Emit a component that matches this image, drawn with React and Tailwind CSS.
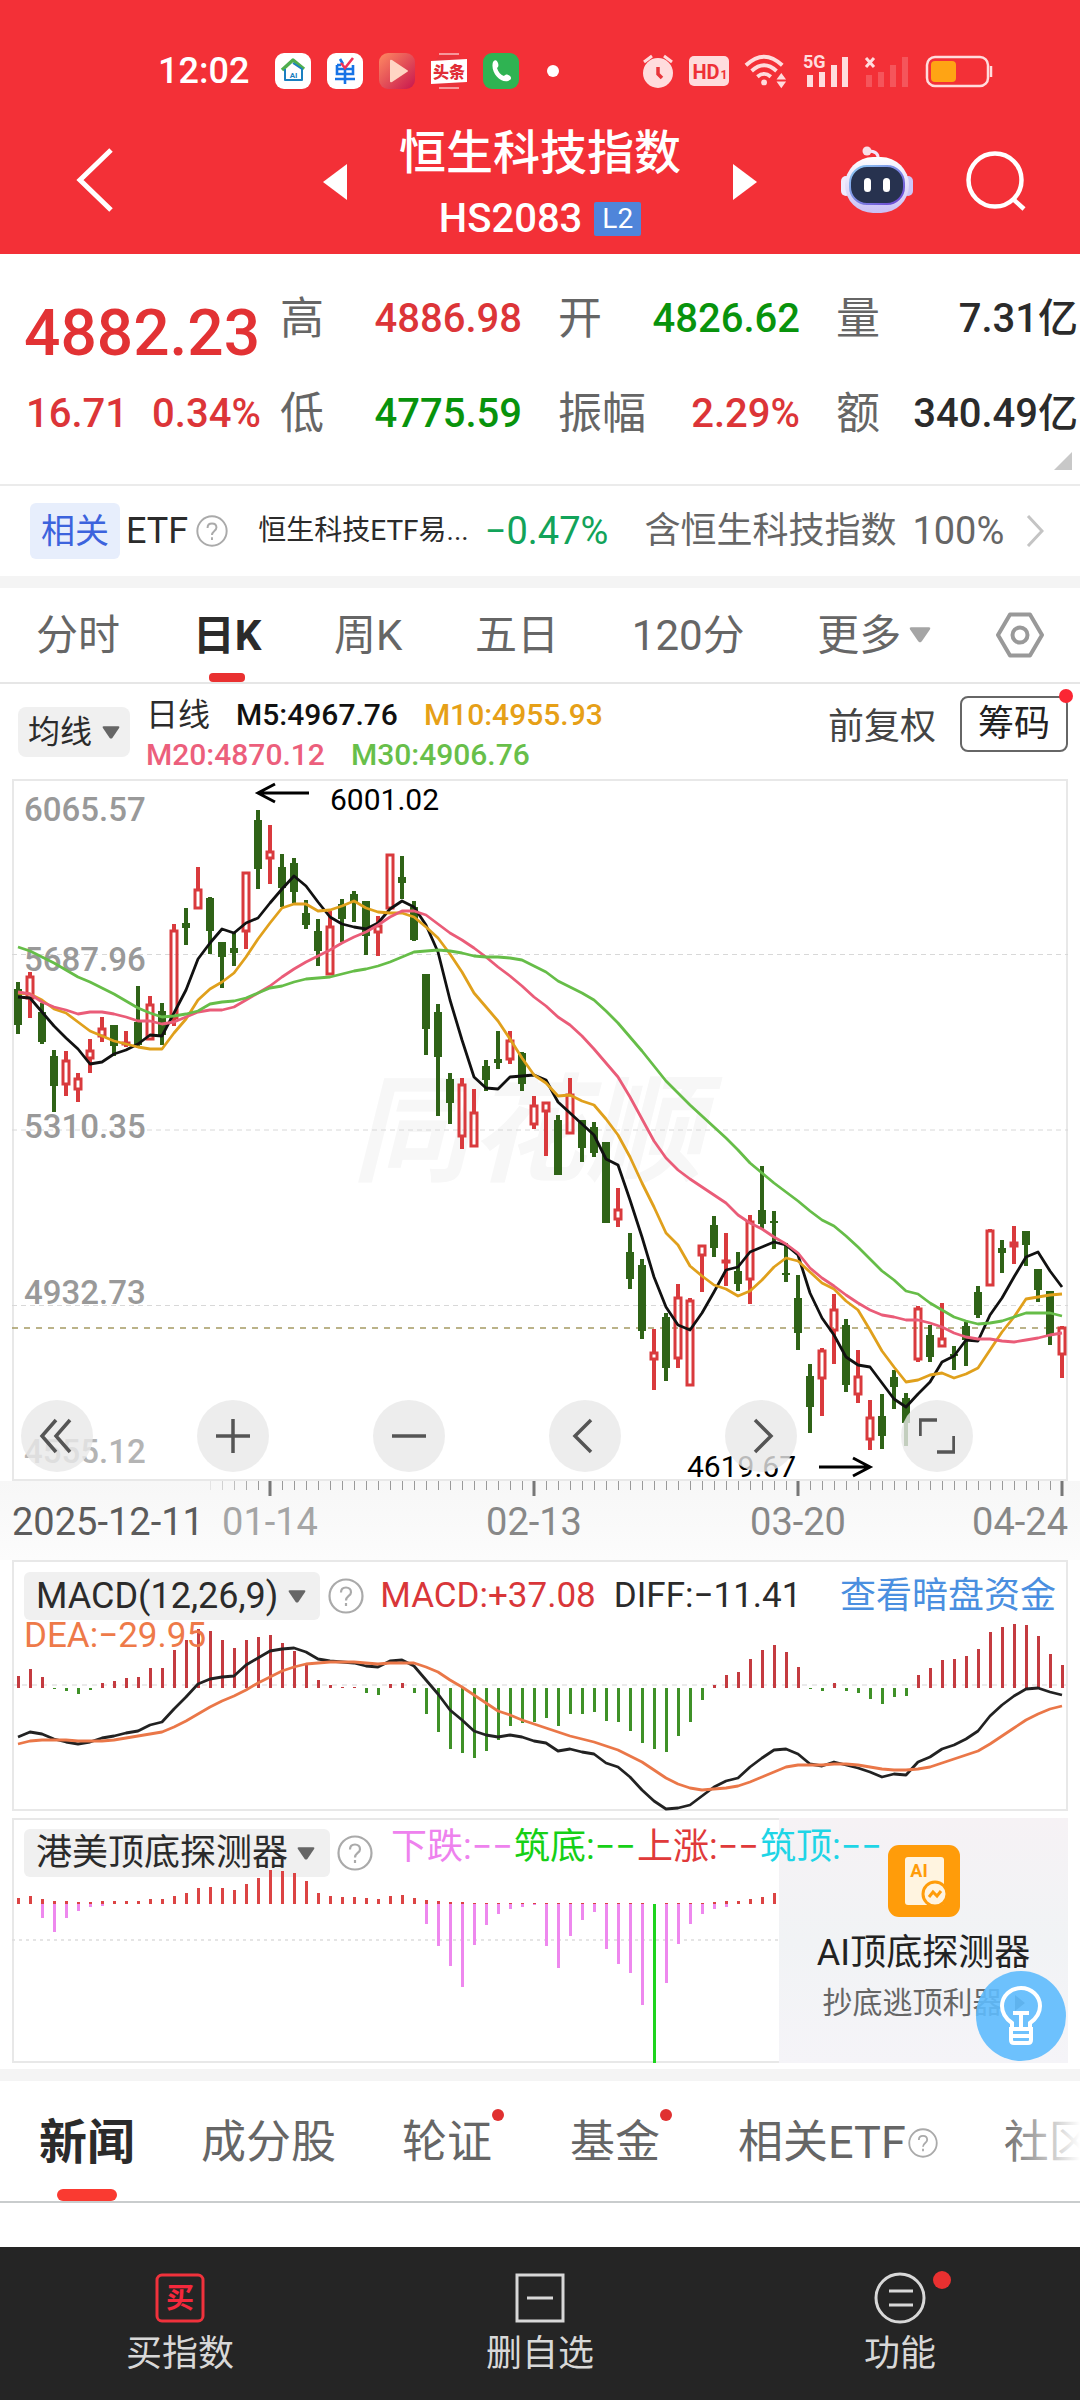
const STEP = 12;

// [up, high, body top, body bottom, low]
const candles = [
  [0, 203, 210, 246, 255], [1, 193, 197, 220, 239], [0, 224, 233, 263, 265], [0, 271, 277, 307, 333],
  [1, 272, 281, 306, 317], [1, 294, 299, 311, 323], [1, 260, 271, 280, 294], [1, 238, 249, 258, 263],
  [0, 246, 246, 267, 277], [1, 252, 263, 266, 268], [0, 207, 243, 266, 269], [1, 217, 225, 261, 261],
  [0, 224, 232, 256, 266], [1, 145, 151, 240, 247], [0, 129, 144, 149, 166], [1, 88, 110, 130, 130],
  [0, 118, 119, 152, 175], [0, 163, 163, 178, 209], [0, 154, 169, 174, 187], [1, 93, 93, 153, 170],
  [0, 31, 41, 90, 110], [1, 46, 72, 80, 105], [0, 75, 88, 109, 128], [0, 79, 84, 113, 124],
  [0, 121, 134, 146, 150], [0, 140, 152, 172, 187], [1, 132, 147, 196, 196], [0, 120, 125, 140, 163],
  [0, 112, 115, 123, 143], [0, 122, 122, 157, 176], [1, 137, 146, 154, 177], [1, 75, 75, 130, 130],
  [0, 77, 98, 104, 120], [0, 122, 128, 161, 162], [0, 195, 195, 250, 276], [0, 225, 233, 278, 337],
  [0, 294, 300, 324, 345], [1, 299, 305, 358, 370], [1, 310, 333, 368, 368], [0, 281, 287, 301, 312],
  [0, 252, 280, 284, 290], [1, 252, 261, 281, 285], [0, 273, 274, 305, 312], [1, 317, 326, 346, 350],
  [1, 323, 323, 333, 377], [0, 336, 341, 396, 396], [1, 299, 315, 355, 355], [0, 341, 341, 369, 383],
  [0, 343, 348, 374, 378], [0, 363, 363, 444, 444], [1, 409, 430, 441, 448], [0, 454, 473, 500, 510],
  [0, 480, 486, 552, 560], [1, 550, 573, 581, 611], [0, 534, 538, 589, 602], [1, 505, 518, 580, 589],
  [1, 519, 521, 607, 607], [1, 466, 466, 477, 513], [0, 437, 446, 469, 478], [1, 454, 481, 483, 507],
  [0, 473, 492, 505, 512], [1, 436, 442, 501, 525], [0, 387, 431, 445, 450], [0, 432, 442, 444, 470],
  [0, 464, 494, 496, 503], [0, 496, 519, 554, 571], [0, 585, 597, 628, 654], [1, 569, 571, 600, 637],
  [1, 515, 530, 552, 585], [0, 540, 546, 606, 613], [1, 571, 597, 616, 624], [1, 621, 638, 661, 671],
  [0, 615, 637, 657, 670], [0, 591, 598, 608, 630], [0, 614, 619, 644, 667], [1, 527, 529, 581, 583],
  [0, 546, 556, 578, 583], [1, 524, 559, 568, 568], [0, 567, 575, 576, 591], [0, 543, 547, 561, 587],
  [0, 507, 513, 536, 539], [1, 450, 451, 507, 507], [0, 461, 469, 474, 494], [1, 447, 463, 468, 485],
  [0, 452, 452, 466, 487], [0, 490, 490, 511, 523], [0, 512, 512, 556, 566], [1, 547, 548, 576, 599],
];

const m5 = [218, 219, 233, 247, 259, 270, 285, 283, 275, 271, 265, 256, 257, 234, 211, 180, 164, 150, 154, 144, 139, 124, 110, 97, 107, 123, 138, 145, 148, 150, 144, 130, 122, 128, 146, 173, 221, 261, 298, 309, 310, 298, 297, 296, 301, 323, 334, 345, 356, 380, 386, 421, 458, 498, 528, 546, 551, 534, 513, 491, 488, 473, 468, 463, 466, 476, 514, 539, 556, 578, 586, 588, 604, 620, 628, 615, 603, 583, 577, 561, 562, 536, 519, 498, 478, 473, 492, 508];
const m10 = [214, 215, 221, 230, 234, 243, 252, 257, 262, 265, 268, 270, 270, 254, 240, 221, 210, 203, 194, 178, 160, 144, 129, 125, 125, 132, 131, 127, 122, 129, 133, 134, 134, 138, 148, 159, 175, 193, 214, 228, 242, 260, 279, 296, 304, 317, 316, 322, 326, 340, 356, 378, 404, 428, 454, 466, 487, 497, 506, 510, 517, 512, 501, 488, 479, 482, 493, 504, 510, 522, 531, 551, 572, 588, 603, 601, 596, 594, 599, 595, 589, 571, 553, 538, 520, 518, 516, 515];
const m20 = [213, 215, 223, 228, 231, 235, 233, 233, 235, 238, 242, 242, 245, 243, 238, 233, 231, 231, 228, 221, 214, 207, 198, 190, 183, 177, 171, 164, 158, 153, 146, 138, 132, 132, 136, 145, 154, 161, 169, 178, 188, 197, 207, 218, 227, 238, 246, 257, 270, 284, 298, 318, 340, 362, 379, 391, 400, 408, 416, 424, 436, 444, 450, 458, 465, 474, 489, 499, 507, 516, 524, 531, 536, 538, 541, 541, 544, 548, 554, 558, 560, 560, 562, 563, 561, 559, 556, 554];
const m30 = [168, 172, 178, 184, 191, 198, 203, 209, 215, 222, 229, 234, 238, 237, 235, 232, 225, 223, 222, 219, 214, 209, 207, 203, 200, 199, 198, 195, 192, 190, 187, 183, 178, 173, 172, 171, 172, 174, 177, 178, 178, 179, 181, 187, 193, 202, 208, 214, 221, 232, 244, 258, 272, 287, 302, 314, 326, 337, 348, 359, 371, 384, 394, 404, 413, 422, 432, 441, 447, 457, 468, 480, 492, 501, 512, 515, 524, 531, 538, 542, 545, 544, 542, 538, 534, 534, 534, 537];

const macd = [12, 19, 11, -1, -3, -6, -2, 5, 7, 10, 11, 20, 20, 38, 48, 59, 57, 48, 40, 48, 51, 53, 45, 37, 23, 8, 3, 1, 1, -5, -7, 4, 5, -5, -26, -44, -61, -65, -70, -63, -52, -38, -35, -34, -30, -38, -26, -26, -24, -33, -34, -43, -55, -61, -64, -48, -34, -12, 3, 13, 16, 29, 38, 43, 36, 21, -1, -3, 5, -3, -5, -11, -16, -9, -8, 13, 20, 28, 29, 32, 39, 56, 61, 64, 63, 52, 34, 23];
const diff = [177, 172, 174, 179, 182, 184, 182, 178, 176, 173, 171, 165, 162, 149, 137, 124, 119, 117, 116, 105, 98, 91, 89, 88, 92, 99, 101, 102, 103, 106, 107, 101, 100, 106, 120, 134, 150, 160, 171, 175, 177, 175, 177, 181, 183, 191, 189, 192, 194, 203, 207, 217, 230, 241, 249, 248, 245, 236, 227, 221, 218, 207, 198, 190, 189, 194, 204, 206, 202, 205, 208, 212, 217, 214, 215, 202, 197, 189, 185, 179, 171, 156, 145, 136, 129, 128, 132, 135];
const dea = [184, 181, 180, 180, 180, 181, 181, 181, 180, 178, 176, 174, 172, 167, 161, 154, 147, 141, 136, 130, 123, 117, 111, 107, 104, 103, 102, 102, 102, 103, 104, 103, 103, 103, 107, 112, 120, 127, 135, 143, 151, 155, 160, 164, 168, 172, 176, 179, 182, 186, 190, 196, 202, 210, 218, 224, 228, 230, 229, 228, 226, 222, 217, 212, 207, 205, 205, 205, 204, 204, 205, 207, 209, 210, 210, 209, 207, 203, 199, 195, 191, 184, 176, 168, 160, 154, 149, 146];

const rise = [6, 8, 5, 3, 3, 2, 2, 3, 3, 3, 3, 5, 5, 8, 11, 16, 17, 16, 14, 20, 26, 34, 33, 31, 23, 11, 8, 7, 7, 6, 5, 8, 9, 6, 4, 3, 2, 2, 1, 1, 1, 1, 1, 1, 1, 1, 1, 1, 1, 1, 1, 1, 1, 0, 1, 1, 1, 1, 2, 3, 3, 5, 7, 11];
const fall = { 2: 14, 3: 28, 4: 14, 5: 7, 6: 3, 7: 2, 34: 20, 35: 42, 36: 62, 37: 83, 38: 41, 39: 21, 40: 10, 41: 5, 42: 3, 43: 1, 44: 42, 45: 64, 46: 32, 47: 16, 48: 8, 49: 45, 50: 60, 51: 69, 52: 101, 54: 79, 55: 40, 56: 20, 57: 10, 58: 5, 59: 3 };

const quotes = [
  { label: "高", value: "4886.98", color: "text-[#dc3538]" },
  { label: "开", value: "4826.62", color: "text-[#08930c]" },
  { label: "量", value: "7.31亿", color: "text-[#2b2b2b]" },
  { label: "低", value: "4775.59", color: "text-[#08930c]" },
  { label: "振幅", value: "2.29%", color: "text-[#dc3538]" },
  { label: "额", value: "340.49亿", color: "text-[#2b2b2b]" },
];

const xAt = (i) => 6 + i * STEP;
const toPoints = (ys) => ys.map((y, i) => `${xAt(i)},${y}`).join(" ");

function Line({ data, color }) {
  return <polyline points={toPoints(data)} fill="none" stroke={color} strokeWidth="2.8" strokeLinejoin="round" />;
}

function Caret({ className }) {
  return (
    <svg viewBox="0 0 20 14" className={className} fill="currentColor" aria-hidden="true">
      <path d="M2 0h16q2 0 1 2l-7.500 11q-1.500 1.500-3 0L1 2Q0 0 2 0z" />
    </svg>
  );
}

function Help({ className = "" }) {
  return (
    <svg viewBox="0 0 36 36" className={`shrink-0 text-[#aaa] ${className}`} fill="none" stroke="currentColor" strokeWidth="2.200" aria-hidden="true">
      <circle cx="18" cy="18" r="16.500" />
      <path d="M13 14.500c0-3 2-5 5-5s5 2 5 4.700c0 3.800-5 3.800-5 8.300" />
      <path d="M18 25v3" />
    </svg>
  );
}

function StatusBar() {
  return (
    <div className="flex items-center h-12 pl-[158px] pr-[85px] text-white">
      <span className="text-4xl leading-none font-medium">12:02</span>
      <div className="flex items-center gap-4 ml-[26px]">
        <svg viewBox="0 0 36 36" className="w-9 h-9">
          <rect width="36" height="36" rx="9" fill="#fff" />
          <path d="M7 17L18 7l11 9" fill="none" stroke="#4fae4e" strokeWidth="3.500" strokeLinejoin="round" />
          <path d="M10 16v11h17V16L18 10" fill="none" stroke="#1a7fc0" strokeWidth="2" strokeLinejoin="round" />
          <text x="18.500" y="25" textAnchor="middle" fontSize="8" fontWeight="700" fill="#1a7fc0">AI</text>
        </svg>
        <svg viewBox="0 0 36 36" className="w-9 h-9" fill="none" strokeWidth="2.600">
          <rect width="36" height="36" rx="9" fill="#fff" />
          <path d="M13 6l3 5M10 12h4M26 12v9H10v-9M10 16h16M8 26h20M18 16v15" stroke="#1673e6" />
          <path d="M14 10l4 5 8-10" stroke="#f0325a" />
        </svg>
        <svg viewBox="0 0 36 36" className="w-9 h-9">
          <defs>
            <linearGradient id="play" x1="0" y1="0" x2="1" y2="1">
              <stop offset="0" stopColor="#ff8a62" />
              <stop offset="1" stopColor="#c8164e" />
            </linearGradient>
          </defs>
          <rect width="36" height="36" rx="9" fill="url(#play)" />
          <path d="M11 8q0-2 2-1l15 10q2 1 0 2L13 29q-2 1-2-1z" fill="#ffd5c4" />
        </svg>
        <svg viewBox="0 0 36 36" className="w-9 h-9">
          <circle cx="18" cy="18" r="17.500" fill="#e8323a" />
          <path d="M8 1h20M8 35h20" stroke="#fff" strokeWidth="1" />
          <path d="M0 8l36-2v23L0 31z" fill="#fff" />
          <text x="18" y="25" textAnchor="middle" fontSize="16" fontWeight="900" fill="#e02d35">头条</text>
        </svg>
        <svg viewBox="0 0 36 36" className="w-9 h-9">
          <rect width="36" height="36" rx="9" fill="#2fb352" />
          <path d="M10 9c2-3 4-2 5 1s0 4-1 5c1 4 4 7 7 8 2-2 3-2 6 0 2 2 1 4-2 5C17 30 7 19 10 9z" fill="#fff" />
        </svg>
      </div>
      <span className="w-3 h-3 ml-[28px] rounded-full bg-white" />
      <div className="flex items-center gap-[15px] ml-auto text-[#ffdcdd]">
        <svg viewBox="0 0 32 36" className="w-8 h-9" fill="currentColor">
          <circle cx="16" cy="20" r="15" />
          <path d="M2 9l8-6M30 9l-8-6" stroke="currentColor" strokeWidth="3" />
          <path d="M16 14v7l4 4" stroke="#e8343a" strokeWidth="3.500" fill="none" />
        </svg>
        <svg viewBox="0 0 40 30" className="w-10 h-[30px]">
          <rect width="40" height="30" rx="5" fill="currentColor" />
          <text x="17" y="23" textAnchor="middle" fontSize="20" fontWeight="700" fill="#ee3036">HD</text>
          <text x="35" y="23" textAnchor="middle" fontSize="12" fontWeight="700" fill="#ee3036">1</text>
        </svg>
        <svg viewBox="0 0 46 36" className="w-11 h-9" fill="none" stroke="currentColor" strokeWidth="4">
          <path d="M2 12Q21-6 40 12M8 18Q21 6 34 18M14 24Q21 18 28 24" />
          <circle cx="21" cy="30" r="3" fill="currentColor" stroke="none" />
          <path d="M34 27l5-7 5 7zM34 29l5 7 5-7z" fill="currentColor" stroke="none" />
        </svg>
        <svg viewBox="0 0 46 36" className="w-[46px] h-9 overflow-visible" fill="currentColor">
          <text x="0" y="15" fontSize="18" fontWeight="700">5G</text>
          <path d="M4 22h6v12H4zM16 19h6v15h-6zM28 12h6v22h-6zM39 4h6v30h-6z" />
        </svg>
        <svg viewBox="0 0 46 36" className="w-[46px] h-9" fill="currentColor">
          <path d="M2 5l8 9M10 5l-8 9" stroke="currentColor" strokeWidth="3" />
          <path d="M2 22h6v12H2zM14 19h6v15h-6zM26 12h6v22h-6zM38 4h6v30h-6z" opacity=".22" />
        </svg>
        <svg viewBox="0 0 70 36" className="w-[70px] h-9">
          <rect x="2" y="4" width="61" height="29" rx="8" fill="none" stroke="currentColor" strokeWidth="2.500" />
          <rect x="6" y="8" width="25" height="21" rx="4" fill="#ffa414" />
          <path d="M66 13v11" stroke="currentColor" strokeWidth="2.500" />
        </svg>
      </div>
    </div>
  );
}

function Header() {
  return (
    <header className="bg-[#f33037] pt-[47px] pb-[13px] text-white">
      <StatusBar />
      <div className="grid grid-cols-[1fr_auto_1fr] items-center mt-7">
        <button type="button" aria-label="返回" className="justify-self-start ml-[76px] pb-1">
          <svg viewBox="0 0 38 64" className="w-[38px] h-16" fill="none" stroke="currentColor" strokeWidth="5">
            <path d="M35 2L4 32l31 30" />
          </svg>
        </button>
        <div className="flex items-center gap-[52px]">
          <button type="button" aria-label="上一个">
            <svg viewBox="0 0 24 36" className="w-6 h-9" fill="currentColor"><path d="M24 0v36L0 18z" /></svg>
          </button>
          <div className="flex flex-col items-center">
            <h1 className="text-[47px] leading-[60px] font-medium">恒生科技指数</h1>
            <div className="flex items-center gap-3 mt-[14px]">
              <span className="text-[40px] leading-[44px] font-medium">HS2083</span>
              <span className="bg-[#4f85da] rounded-xs px-2 text-[28px] leading-[34px]">L2</span>
            </div>
          </div>
          <button type="button" aria-label="下一个">
            <svg viewBox="0 0 24 36" className="w-6 h-9" fill="currentColor"><path d="M0 0v36l24-18z" /></svg>
          </button>
        </div>
        <div className="flex items-center justify-end gap-[52px] pr-[53px] pb-1">
          <button type="button" aria-label="智能助手">
            <svg viewBox="0 0 72 68" className="w-[72px] h-[68px]">
              <defs>
                <linearGradient id="head" x1="0" y1="0" x2="0" y2="1">
                  <stop offset="0" stopColor="#ffffff" />
                  <stop offset="1" stopColor="#c9bff5" />
                </linearGradient>
                <linearGradient id="visor" x1="0" y1="0" x2="1" y2="1">
                  <stop offset="0" stopColor="#8fd0f5" />
                  <stop offset="1" stopColor="#6a3fd0" />
                </linearGradient>
              </defs>
              <path d="M37 13Q38 5 27 5" fill="none" stroke="#f3e6fb" strokeWidth="3" />
              <circle cx="26" cy="5" r="4.500" fill="#f8dfe8" />
              <rect x="0" y="30" width="10" height="20" rx="5" fill="#efeafd" />
              <rect x="62" y="30" width="10" height="20" rx="5" fill="#cdc6f8" />
              <rect x="4" y="11" width="64" height="56" rx="28" fill="url(#head)" />
              <rect x="9" y="20" width="54" height="38" rx="17" fill="#27324f" stroke="url(#visor)" strokeWidth="2" />
              <rect x="23" y="32" width="7" height="14" rx="3.500" fill="#fff" />
              <rect x="42" y="32" width="7" height="14" rx="3.500" fill="#fff" />
            </svg>
          </button>
          <button type="button" aria-label="搜索">
            <svg viewBox="0 0 62 62" className="w-[62px] h-[62px]" fill="none" stroke="currentColor" strokeWidth="4.500">
              <circle cx="30" cy="31" r="26.500" />
              <path d="M48 50l11 10" />
            </svg>
          </button>
        </div>
      </div>
    </header>
  );
}

function Quotes() {
  return (
    <section className="relative flex pl-6 pr-[2px] pt-[34px] pb-10 border-b-2 border-[#ebebeb]">
      <div className="w-[256px] shrink-0 font-medium">
        <div className="text-[64px] leading-[86px] pt-[3px] text-[#e23234]">4882.23</div>
        <div className="flex gap-6 pl-[2px] pt-[7px] text-[40px] leading-[60px] text-[#dc3538]">
          <span>16.71</span>
          <span>0.34%</span>
        </div>
      </div>
      <dl className="grid grid-cols-3 flex-1 gap-x-9 gap-y-[34px] text-[44px] leading-[60px]">
        {quotes.map((q) => (
          <div key={q.label} className="flex justify-between items-center whitespace-nowrap">
            <dt className="text-[#666]">{q.label}</dt>
            <dd className={`text-[40px] font-medium ${q.color}`}>{q.value}</dd>
          </div>
        ))}
      </dl>
      <svg viewBox="0 0 18 18" className="absolute right-2 bottom-[14px] w-[18px] h-[18px]" fill="#c8c8c8"><path d="M18 0v18H0z" /></svg>
    </section>
  );
}

function EtfRow() {
  return (
    <a href="#etf" className="flex items-center h-[90px] pl-[30px] pr-9 whitespace-nowrap text-[#2b2b2b] border-b-12 border-[#f4f4f4] box-content">
      <span className="rounded-md bg-[#e7eefc] px-[11px] text-[34px] leading-[56px] text-[#3c63dd]">相关</span>
      <span className="ml-[6px] text-[36px]">ETF</span>
      <Help className="w-8 h-8 ml-2" />
      <span className="ml-[30px] text-[28px]">恒生科技ETF易...</span>
      <span className="ml-4 text-[38px] text-[#12a35a]">−0.47%</span>
      <span className="ml-9 text-[36px] text-[#666]">含恒生科技指数</span>
      <span className="ml-4 text-[38px] text-[#666]">100%</span>
      <svg viewBox="0 0 18 32" className="w-[18px] h-8 ml-auto" fill="none" stroke="#c4c4c4" strokeWidth="3"><path d="M2 1l14 15L2 31" /></svg>
    </a>
  );
}

function PeriodTabs() {
  return (
    <nav className="flex items-center justify-between h-[96px] px-9 border-b-2 border-[#e6e6e6] text-[42px] text-[#666]">
      <button type="button">分时</button>
      <button type="button" className="relative self-stretch font-bold text-[#2b2b2b]">
        日K
        <span className="absolute bottom-0 left-1/2 -translate-x-1/2 w-9 h-[9px] rounded bg-[#e93030]" />
      </button>
      <button type="button">周K</button>
      <button type="button">五日</button>
      <button type="button">120分</button>
      <button type="button" className="flex items-center gap-2 -mr-2">
        更多
        <Caret className="w-[22px] h-[18px] text-[#a5a5a5]" />
      </button>
      <button type="button" aria-label="设置">
        <svg viewBox="0 0 48 46" className="w-12 h-[46px]" fill="none" stroke="#999" strokeWidth="4" strokeLinejoin="round">
          <path d="M14 2.500h20L46 23 34 43.500H14L2 23z" />
          <circle cx="24" cy="23" r="7.500" />
        </svg>
      </button>
    </nav>
  );
}

function Averages() {
  return (
    <div className="flex items-start h-[95px] pl-[18px] pr-3">
      <button type="button" className="flex items-center gap-[10px] mt-[23px] px-[10px] h-[50px] rounded-lg bg-[#f0f0f0] text-[32px] text-[#2b2b2b]">
        均线
        <Caret className="w-[18px] h-[13px] text-[#666]" />
      </button>
      <div className="ml-4 mt-[11px] text-[30px] leading-10 font-medium">
        <div className="flex gap-[26px]">
          <span className="text-[32px] text-[#2b2b2b] font-normal">日线</span>
          <span className="text-[#111]">M5:4967.76</span>
          <span className="text-[#e6a017]">M10:4955.93</span>
        </div>
        <div className="flex gap-[26px]">
          <span className="text-[#ec5f7c]">M20:4870.12</span>
          <span className="text-[#68bf4a]">M30:4906.76</span>
        </div>
      </div>
      <span className="ml-auto mt-4 text-[36px] leading-[54px] text-[#444]">前复权</span>
      <button type="button" className="relative ml-6 mt-3 w-[108px] h-[56px] rounded-lg border-2 border-[#666] text-[36px] leading-[52px] text-[#222]">
        筹码
        <span className="absolute -top-[9px] -right-[7px] w-[14px] h-[14px] rounded-full bg-[#fb2633]" />
      </button>
    </div>
  );
}

function Candle({ i, data }) {
  const [up, high, top, bottom, low] = data;
  const x = xAt(i);
  if (!up) {
    return (
      <g fill="#2f6317">
        <rect x={x - 2} y={high} width="4" height={low - high} />
        <rect x={x - 4} y={top} width="8" height={Math.max(bottom - top, 2)} />
      </g>
    );
  }
  return (
    <g stroke="#d93a3d" fill="none">
      <path d={`M${x} ${high}V${top}M${x} ${bottom}V${low}`} strokeWidth="4" />
      <rect x={x - 3} y={top + 1} width="6" height={Math.max(bottom - top - 2, 1)} strokeWidth="3" />
    </g>
  );
}

const tools = [
  { name: "收起", d: "M17 2L3 18l14 16M31 2L17 18l14 16" },
  { name: "放大", d: "M18 1v34M1 18h34" },
  { name: "缩小", d: "M1 18h34" },
  { name: "左移", d: "M24 2L8 18l16 16" },
  { name: "右移", d: "M12 2l16 16-16 16" },
  { name: "全屏", d: "M1 18V2h17M35 18v16H18" },
];

function PriceChart() {
  return (
    <div className="relative mx-3">
      <svg viewBox="0 0 1056 702" className="block w-full overflow-visible" role="img" aria-label="日K线">
        <rect x="1" y="1" width="1054" height="700" fill="#fff" stroke="#e8e8e8" strokeWidth="2" />
        <text x="340" y="393" fontSize="117" fontWeight="700" fontStyle="italic" fill="#f7f7f7">同花顺</text>
        <path d="M0 175.500h1056M0 351h1056M0 526.500h1056" stroke="#d8d8d8" strokeWidth="1" strokeDasharray="5 4" />
        <path d="M0 549h1056" stroke="#a59a63" strokeWidth="1.500" strokeDasharray="6 6" />
        <g fontSize="33" fontWeight="500" fill="#999">
          <text x="12" y="42">6065.57</text>
          <text x="12" y="192">5687.96</text>
          <text x="12" y="359">5310.35</text>
          <text x="12" y="525">4932.73</text>
          <text x="12" y="684" fill="#b4b4b4">4555.12</text>
        </g>
        {candles.map((c, i) => <Candle key={i} i={i} data={c} />)}
        <Line data={m5} color="#111" />
        <Line data={m10} color="#e0a01c" />
        <Line data={m20} color="#ea5c78" />
        <Line data={m30} color="#66bd48" />
        <g stroke="#000" strokeWidth="3" fill="none">
          <path d="M297 14h-50M263 5l-17 9 17 9" />
          <path d="M807 688h50M841 679l17 9-17 9" />
        </g>
        <g fontSize="30" fill="#000">
          <text x="318" y="31">6001.02</text>
          <text x="675" y="698">4619.67</text>
        </g>
      </svg>
      <div className="absolute left-[9px] bottom-[9px] flex gap-[104px]">
        {tools.map((t) => (
          <button key={t.name} type="button" aria-label={t.name} className="flex items-center justify-center w-[72px] h-[72px] rounded-full bg-[#e9e9e9]/80">
            <svg viewBox="0 0 36 36" className="w-9 h-9" fill="none" stroke="#555" strokeWidth="3.500"><path d={t.d} /></svg>
          </button>
        ))}
      </div>
    </div>
  );
}

function TimeAxis() {
  return (
    <div className="px-3 bg-linear-to-b from-[#f7f7f7] to-[#fcfcfc]">
      <svg viewBox="0 0 1056 79" className="block w-full overflow-visible">
        {candles.map((_, i) => i > 15 && (
          <rect key={i} x={xAt(i)} y="0" width="1" height="9" fill="#999" opacity={Math.min(1, (i - 15) / 5)} />
        ))}
        <path d="M258 0v15M522 0v15M786 0v15M1050 0v15" stroke="#777" strokeWidth="3" />
        <g fontSize="38" fill="#888">
          <text x="0" y="54" fill="#5c5c5c">2025-12-11</text>
          <text x="258" y="54" textAnchor="middle" fill="#a5a5a5">01-14</text>
          <text x="522" y="54" textAnchor="middle">02-13</text>
          <text x="786" y="54" textAnchor="middle">03-20</text>
          <text x="1056" y="54" textAnchor="end">04-24</text>
        </g>
      </svg>
    </div>
  );
}

function MacdPanel() {
  return (
    <section className="relative mx-3">
      <svg viewBox="0 0 1056 251" className="block w-full" role="img" aria-label="MACD">
        <rect x="1" y="1" width="1054" height="249" fill="#fff" stroke="#e8e8e8" strokeWidth="2" />
        <path d="M0 125h1056" stroke="#e4e4e4" strokeWidth="1.500" strokeDasharray="5 5" />
        {macd.map((v, i) => (
          <rect key={i} x={xAt(i) - 1} y={v > 0 ? 128 - v : 128} width="3" height={Math.abs(v)} fill={v > 0 ? "#c43b40" : "#3f9128"} />
        ))}
        <Line data={diff} color="#222" />
        <Line data={dea} color="#ea7748" />
      </svg>
      <div className="absolute inset-x-3 top-[10px] flex items-center gap-2 whitespace-nowrap text-[35px] text-[#2b2b2b]">
        <button type="button" className="flex items-center gap-[10px] h-12 pl-3 pr-[14px] rounded-md bg-[#f0f0f0] text-[36px]">
          MACD(12,26,9)
          <Caret className="w-[18px] h-[13px] text-[#666]" />
        </button>
        <Help className="w-9 h-9" />
        <span className="ml-2 text-[#d93639]">MACD:+37.08</span>
        <span className="ml-[10px]">DIFF:−11.41</span>
        <a href="#dark" className="ml-auto text-[36px] leading-none text-[#4a8fe0]">查看暗盘资金</a>
      </div>
      <span className="absolute left-3 top-[56px] text-[35px] leading-10 text-[#ee7a49]">DEA:−29.95</span>
    </section>
  );
}

function DetectorPanel() {
  return (
    <section className="relative mx-3 mt-[7px]">
      <svg viewBox="0 0 1056 245" className="block w-full" role="img" aria-label="港美顶底探测器">
        <rect x="1" y="1" width="1054" height="243" fill="#fff" stroke="#e8e8e8" strokeWidth="2" />
        <path d="M0 122h770" stroke="#ddd" strokeWidth="1.500" strokeDasharray="3 4" />
        <rect x="12" y="11" width="306" height="48" rx="6" fill="#f0f0f0" />
        {rise.map((v, i) => <rect key={i} x={xAt(i) - 1} y={86 - v} width="3" height={v} fill="#dc4444" />)}
        {Object.entries(fall).map(([i, v]) => <rect key={i} x={xAt(Number(i)) - 1} y="86" width="3" height={v} fill="#ee88ee" />)}
        <rect x={xAt(53) - 1} y="86" width="3" height="159" fill="#1ed41e" />
      </svg>
      <div className="absolute right-0 inset-y-0 w-[289px] flex flex-col items-center pt-[27px] bg-linear-to-b from-[#f6f2f5] via-[#f1f3f5] to-[#f5f4f8]">
        <svg viewBox="0 0 72 72" className="w-[72px] h-[72px]">
          <rect width="72" height="72" rx="11" fill="#ff9c0a" />
          <path d="M20 12h33q3 0 3 3v42q0 3-3 3H20q-3 0-3-3V15q0-3 3-3z" fill="#fff4e0" />
          <text x="31" y="32" textAnchor="middle" fontSize="18" fontWeight="700" fill="#ff9c0a">AI</text>
          <circle cx="47" cy="49" r="12" fill="#fff4e0" stroke="#ff9c0a" strokeWidth="3" />
          <path d="M41 52l4-5 4 4 4-5" fill="none" stroke="#ff9c0a" strokeWidth="3" />
        </svg>
        <a href="#ai" className="mt-[15px] text-[36px] leading-[42px] text-[#222]">AI顶底探测器</a>
        <span className="flex items-center gap-3 mt-2 text-[30px] leading-[42px] text-[#666]">
          抄底逃顶利器
          <svg viewBox="0 0 10 16" className="w-[10px] h-4" fill="currentColor"><path d="M0 0l10 8-10 8z" /></svg>
        </span>
      </div>
      <div className="absolute left-3 top-[11px] flex items-center whitespace-nowrap text-[36px] leading-none">
        <button type="button" className="flex items-center gap-[9px] h-12 pl-3 pr-[14px] text-[#2b2b2b]">
          港美顶底探测器
          <Caret className="w-[18px] h-[13px] text-[#666]" />
        </button>
        <Help className="w-9 h-9 mx-2" />
        <div className="flex ml-[10px] -mt-3">
          <span className="w-[123px] text-[#ee82ee]">下跌:−−</span>
          <span className="w-[123px] text-[#16d016]">筑底:−−</span>
          <span className="w-[123px] text-[#e03a3a]">上涨:−−</span>
          <span className="w-[123px] text-[#1fd5e6]">筑顶:−−</span>
        </div>
      </div>
      <button type="button" aria-label="提示" className="absolute right-[2px] bottom-[2px] w-[90px] h-[90px] rounded-full bg-[#5ebbfd]/90 flex items-center justify-center">
        <svg viewBox="0 0 44 60" className="w-11 h-[60px]" fill="none" stroke="#fff" strokeWidth="4">
          <path d="M13 42v-5Q3 30 3 20a19 18 0 0138 0q0 10-10 17v5" />
          <path d="M12 43h20v11q0 3-3 3H15q-3 0-3-3zM12 50h20M22 43V27M14 27h16" />
        </svg>
      </button>
    </section>
  );
}

function NewsTabs() {
  return (
    <nav className="relative flex items-center gap-[66px] h-[116px] pt-1 pl-[39px] mt-[6px] box-content border-t-12 border-t-[#f4f4f4] border-b-2 border-b-[#c9cccd] overflow-hidden whitespace-nowrap text-[45px] text-[#666]">
      <button type="button" className="relative self-stretch text-[48px] font-bold text-[#2b2b2b]">
        新闻
        <span className="absolute bottom-0 left-1/2 -translate-x-1/2 w-[60px] h-3 rounded-full bg-[#fa3a31]" />
      </button>
      <button type="button">成分股</button>
      <button type="button" className="flex">轮证<span className="w-3 h-3 rounded-full bg-[#e03030]" /></button>
      <button type="button" className="flex">基金<span className="w-3 h-3 rounded-full bg-[#e03030]" /></button>
      <button type="button" className="flex items-center gap-[2px]">相关ETF<Help className="w-[30px] h-[30px]" /></button>
      <button type="button">社区</button>
      <span className="absolute right-0 inset-y-0 w-20 bg-linear-to-r from-white/0 to-white" />
    </nav>
  );
}

function BottomBar() {
  return (
    <nav className="grid grid-cols-3 h-[153px] mt-[44px] pt-[25px] bg-[#252525] text-[36px] leading-[54px] text-[#d8d8d8]">
      <button type="button" className="flex flex-col items-center gap-[3px]">
        <svg viewBox="0 0 52 52" className="w-[52px] h-[52px]">
          <rect x="3" y="3" width="46" height="46" rx="5" fill="none" stroke="#f0323c" strokeWidth="3" />
          <text x="26" y="36" textAnchor="middle" fontSize="28" fontWeight="700" fill="#f5283c">买</text>
        </svg>
        买指数
      </button>
      <button type="button" className="flex flex-col items-center gap-[3px]">
        <svg viewBox="0 0 52 52" className="w-[52px] h-[52px]" fill="none" stroke="currentColor" strokeWidth="3">
          <path d="M3 3h46v46H3zM13 26h26" />
        </svg>
        删自选
      </button>
      <button type="button" className="flex flex-col items-center gap-[3px]">
        <span className="relative">
          <svg viewBox="0 0 52 52" className="w-[52px] h-[52px]" fill="none" stroke="currentColor" strokeWidth="3">
            <circle cx="26" cy="26" r="24" />
            <path d="M15 19h24M15 33h24" />
          </svg>
          <span className="absolute -right-[25px] -top-[1px] w-[18px] h-[18px] rounded-full bg-[#e93030]" />
        </span>
        功能
      </button>
    </nav>
  );
}

function App() {
  return (
    <div className="min-h-screen bg-white font-[Roboto,'Noto_Sans_CJK_SC',sans-serif] overflow-x-hidden">
      <Header />
      <Quotes />
      <EtfRow />
      <PeriodTabs />
      <Averages />
      <PriceChart />
      <TimeAxis />
      <MacdPanel />
      <DetectorPanel />
      <NewsTabs />
      <BottomBar />
    </div>
  );
}

export default App;
